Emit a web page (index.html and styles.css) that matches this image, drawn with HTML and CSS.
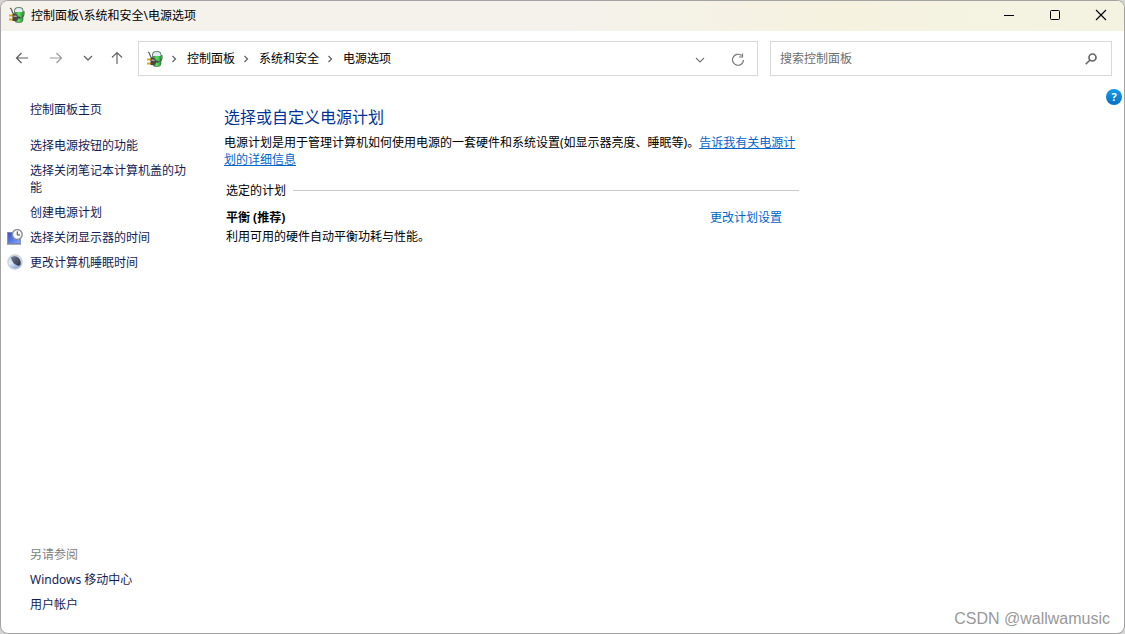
FILE: index.html
```html
<!DOCTYPE html>
<html lang="zh-CN">
<head>
<meta charset="utf-8">
<meta name="viewport" content="width=device-width, initial-scale=1">
<title>电源选项</title>
<link rel="stylesheet" href="styles.css">
</head>
<body>
<svg class="defs" width="0" height="0" aria-hidden="true">
  <defs>
    <linearGradient id="cell" x1="0" x2="1"><stop offset="0" stop-color="#1f8a2c"/><stop offset=".5" stop-color="#5fe062"/><stop offset="1" stop-color="#22a032"/></linearGradient>
    <symbol id="power" viewBox="0 0 16 16">
      <rect x="5.500" y=".5" width="8.500" height="15" rx="3" fill="url(#cell)" stroke="#5a665e" stroke-width=".7"/>
      <path d="M6 3.500Q6 1 9.700 1Q13.500 1 13.500 3.500V5H6Z" fill="#e4e8f8"/>
      <path d="M1 1Q3 2 3 4Q3 6 5.500 7.500M10 11C14 11.500 15.700 8 14.700 4" fill="none" stroke="#555" stroke-width="1.200"/>
      <path d="M0 8.500H4M0 12.500H4" stroke="#e8a810" stroke-width="2"/>
      <path d="M3.500 7H7Q9 8 9 9.500H11V11.500H9Q9 13.500 7 14H3.500Z" fill="#474747"/>
      <path d="M4.500 8.500H7Q8 9 8 10H4.500Z" fill="#a4a4a4"/>
    </symbol>
    <symbol id="chevron-right" viewBox="0 0 6 8"><path d="M1.500 1L4.500 4L1.500 7" fill="none" stroke="#666" stroke-width="1.300"/></symbol>
  </defs>
</svg>
<div class="window">
  <header class="titlebar">
    <svg class="app-icon" aria-hidden="true"><use href="#power"/></svg>
    <span class="title">控制面板\系统和安全\电源选项</span>
    <div class="controls">
      <button class="control" type="button" aria-label="最小化"><svg width="12" height="12"><path d="M1 6.500H11" stroke="#000"/></svg></button>
      <button class="control" type="button" aria-label="最大化"><svg width="12" height="12"><rect x="1.500" y="1.500" width="9" height="9" rx="1" fill="none" stroke="#000"/></svg></button>
      <button class="control" type="button" aria-label="关闭"><svg width="12" height="12"><path d="M1 1L11 11M11 1L1 11" stroke="#000" stroke-width="1.100"/></svg></button>
    </div>
  </header>
  <div class="toolbar">
    <nav class="history" aria-label="导航">
      <button class="nav" type="button" aria-label="后退"><svg width="14" height="14"><path d="M13 7H1.500M6.500 2L1.500 7L6.500 12" fill="none" stroke="#5c5c5c" stroke-width="1.200"/></svg></button>
      <button class="nav" type="button" aria-label="前进"><svg width="14" height="14"><path d="M1 7H12.500M7.500 2L12.500 7L7.500 12" fill="none" stroke="#9a9a9a" stroke-width="1.200"/></svg></button>
      <button class="nav nav-recent" type="button" aria-label="最近位置"><svg width="10" height="14"><path d="M1 5L5 9L9 5" fill="none" stroke="#666" stroke-width="1.300"/></svg></button>
      <button class="nav" type="button" aria-label="向上"><svg width="14" height="14"><path d="M7 13V1.500M2 6.500L7 1.500L12 6.500" fill="none" stroke="#666" stroke-width="1.200"/></svg></button>
    </nav>
    <div class="address">
      <svg class="app-icon" aria-hidden="true"><use href="#power"/></svg>
      <svg class="sep" aria-hidden="true"><use href="#chevron-right"/></svg>
      <a class="crumb" href="#">控制面板</a>
      <svg class="sep" aria-hidden="true"><use href="#chevron-right"/></svg>
      <a class="crumb" href="#">系统和安全</a>
      <svg class="sep" aria-hidden="true"><use href="#chevron-right"/></svg>
      <a class="crumb" href="#">电源选项</a>
      <div class="address-actions">
        <button class="tool" type="button" aria-label="展开地址"><svg width="10" height="14"><path d="M1 6L5 10L9 6" fill="none" stroke="#777" stroke-width="1.100"/></svg></button>
        <button class="tool" type="button" aria-label="刷新"><svg width="14" height="14"><path d="M10.500 3.500A5.500 5.500 0 1 0 12.500 8" fill="none" stroke="#777" stroke-width="1.200"/><path d="M11.500 1.500V5H8" fill="none" stroke="#777" stroke-width="1.200"/></svg></button>
      </div>
    </div>
    <form class="search" role="search">
      <input class="search-input" type="search" placeholder="搜索控制面板" aria-label="搜索控制面板">
      <button class="tool" type="button" aria-label="搜索"><svg width="12" height="12"><circle cx="7.500" cy="4.500" r="3.500" fill="none" stroke="#666" stroke-width="1.700"/><path d="M5 7L.7 11.300" stroke="#666" stroke-width="1.600"/></svg></button>
    </form>
  </div>
  <div class="content">
    <aside class="sidebar">
      <a class="side-link home" href="#">控制面板主页</a>
      <nav class="side-list" aria-label="任务">
        <a class="side-link" href="#">选择电源按钮的功能</a>
        <a class="side-link" href="#">选择关闭笔记本计算机盖的功能</a>
        <a class="side-link" href="#">创建电源计划</a>
        <a class="side-link with-icon" href="#">
          <svg width="16" height="16" aria-hidden="true"><defs><linearGradient id="screen" x1="0" x2="1" y2="1"><stop offset="0" stop-color="#2c4ad4"/><stop offset="1" stop-color="#86a8fa"/></linearGradient></defs><rect x=".7" y="3.500" width="12.600" height="11" fill="url(#screen)" stroke="#7482b8"/><path d="M0 15.300H14" stroke="#8d93a6"/><circle cx="10.300" cy="5.500" r="4.900" fill="#f4f6f8" stroke="#8c8f94" stroke-width="1.400"/><path d="M10.300 2.500V6H13" fill="none" stroke="#444"/></svg>
          选择关闭显示器的时间</a>
        <a class="side-link with-icon" href="#">
          <svg width="16" height="16" aria-hidden="true"><defs><linearGradient id="moon" x1=".2" y1="0" x2=".6" y2="1"><stop offset="0" stop-color="#b8cdec"/><stop offset=".5" stop-color="#dcebfb"/><stop offset="1" stop-color="#7f9ed8"/></linearGradient><linearGradient id="shade" x1="0" y1="0" x2="1" y2="1"><stop offset="0" stop-color="#74788a"/><stop offset="1" stop-color="#2c3244"/></linearGradient></defs><circle cx="8" cy="8" r="7.200" fill="url(#moon)" stroke="#ccd0d8" stroke-width="1.200"/><path d="M4 3.500Q7.500 1 11 3.200Q14.500 6 13.500 10.500Q12.500 12 11 11.700Q5 10 4 3.500Z" fill="url(#shade)"/></svg>
          更改计算机睡眠时间</a>
      </nav>
      <nav class="see-also" aria-label="另请参阅">
        <span class="see-title">另请参阅</span>
        <a class="side-link see-link" href="#">Windows 移动中心</a>
        <a class="side-link see-link" href="#">用户帐户</a>
      </nav>
    </aside>
    <main class="main">
      <h1 class="heading">选择或自定义电源计划</h1>
      <p class="intro">电源计划是用于管理计算机如何使用电源的一套硬件和系统设置(如显示器亮度、睡眠等)。<a class="link underlined" href="#">告诉我有关电源计划的详细信息</a></p>
      <section class="plans">
        <h2 class="plans-title">选定的计划</h2>
        <div class="plan">
          <h3 class="plan-name">平衡 (推荐)</h3>
          <a class="link" href="#">更改计划设置</a>
        </div>
        <p class="plan-text">利用可用的硬件自动平衡功耗与性能。</p>
      </section>
    </main>
    <div class="aside-end">
      <button class="help" type="button" aria-label="帮助">?</button>
      <span class="credit">CSDN @wallwamusic</span>
    </div>
  </div>
</div>
</body>
</html>
```
FILE: styles.css
```css
* { box-sizing: border-box; }

body {
  margin: 0;
  background: #d4d4d4;
  color: #000;
  font: 12px/17px "Noto Sans", "Noto Sans CJK SC", sans-serif;
}

h1, h2, h3, p { margin: 0; font-size: inherit; font-weight: 400; }
a { color: inherit; text-decoration: none; }
button { padding: 0; border: 0; background: none; color: inherit; font: inherit; }
svg { display: block; flex: none; }
.defs { position: absolute; }

.window {
  display: flex;
  flex-direction: column;
  min-height: 100vh;
  overflow: hidden;
  border: 1px solid #a3a3a3;
  border-radius: 8px;
  background: #fff;
}

.titlebar {
  display: flex;
  align-items: center;
  height: 30px;
  padding: 0 0 2px 8px;
  background: linear-gradient(90deg, #f5f2ec 0%, #f5f2ec 50%, #f5f2e0 75%, #f4f3e2 100%);
}
.app-icon { width: 16px; height: 16px; }
.title { margin-left: 6px; }
.controls { display: flex; margin-left: auto; }
.control { display: grid; place-items: center; width: 46px; height: 28px; }

.toolbar { display: flex; gap: 12px; padding: 10px 12px 0 14px; }
.history { display: flex; align-items: center; gap: 20px; width: 111px; padding-bottom: 2px; }
.nav-recent { margin-right: -3px; }

.address, .search {
  display: flex;
  align-items: center;
  height: 35px;
  border: 1px solid #d9d9d9;
}
.address { flex: 620 1 620px; padding: 0 12px 0 8px; }
.search { flex: 342 1 342px; padding: 0 14px 0 9px; }
.sep { width: 6px; height: 8px; margin: 0 10px 0 8px; }
.address-actions { display: flex; align-items: center; gap: 26px; margin-left: auto; }
.search-input {
  flex: 1;
  min-width: 0;
  padding: 0;
  border: 0;
  outline: 0;
  background: none;
  font: inherit;
}
.search-input::placeholder { color: #6d6d6d; opacity: 1; }

.content { display: flex; flex: 1; }
.sidebar {
  display: flex;
  flex-direction: column;
  width: 223px;
  padding: 25px 35px 20px 29px;
  color: #151c55;
}
.home { margin-bottom: 19px; }
.side-list, .see-also { display: flex; flex-direction: column; gap: 8px; }
.with-icon { display: flex; gap: 7px; margin-left: -23px; }
.see-also { margin-top: auto; }
.see-title { color: #808080; }

.main { flex: 0 1 575px; padding-top: 29px; }
.heading { color: #003399; font-size: 16px; line-height: 24px; }
.intro { margin-top: 5px; }
.link { color: #0066cc; }
.underlined { text-decoration: underline; }
.plans { margin-top: 14px; padding-left: 2px; }
.plans-title { display: flex; align-items: center; gap: 7px; }
.plans-title::after { content: ""; flex: 1; height: 1px; background: #cacaca; }
.plan { display: flex; justify-content: space-between; margin-top: 10px; padding-right: 17px; }
.plan-name { font-weight: 700; }
.plan-text { margin-top: 2px; }

.aside-end {
  display: flex;
  flex: 1;
  flex-direction: column;
  justify-content: space-between;
  align-items: flex-end;
  padding: 13px 2px 4px 0;
}
.help {
  width: 16px;
  height: 16px;
  border-radius: 50%;
  background: linear-gradient(#149be6, #0870c6);
  color: #fff;
  font-size: 11px;
  font-weight: 700;
  line-height: 16px;
}
.credit {
  margin-right: 12px;
  color: #999;
  font: 16px/20px "Liberation Sans", sans-serif;
}
```
